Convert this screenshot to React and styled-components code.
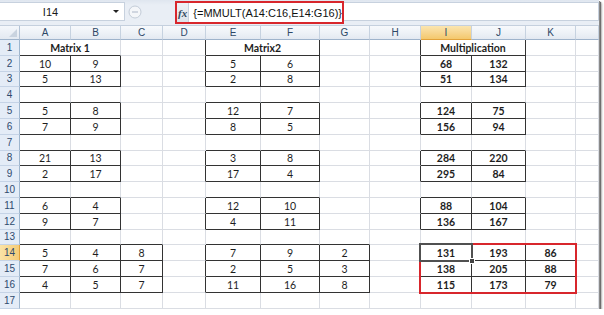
import React from "react";
import styled, { createGlobalStyle } from "styled-components";

const Global = createGlobalStyle`
  html, body { margin: 0; padding: 0; background: #ffffff; }
  body { font-family: Lato, "Open Sans", sans-serif; }
`;

const COL_WIDTHS = [51, 50, 42, 43, 55, 59, 50, 51, 51, 54, 50, 23];
const COL_NAMES = ["A", "B", "C", "D", "E", "F", "G", "H", "I", "J", "K", ""];
const ROW_COUNT = 17;
const ACTIVE_ROW = 14;
const ACTIVE_COL = 8;

const TABLES = [
  { r: 2, c: 0, rows: [[10, 9], [5, 13]] },
  { r: 5, c: 0, rows: [[5, 8], [7, 9]] },
  { r: 8, c: 0, rows: [[21, 13], [2, 17]] },
  { r: 11, c: 0, rows: [[6, 4], [9, 7]] },
  { r: 14, c: 0, rows: [[5, 4, 8], [7, 6, 7], [4, 5, 7]] },
  { r: 2, c: 4, rows: [[5, 6], [2, 8]] },
  { r: 5, c: 4, rows: [[12, 7], [8, 5]] },
  { r: 8, c: 4, rows: [[3, 8], [17, 4]] },
  { r: 11, c: 4, rows: [[12, 10], [4, 11]] },
  { r: 14, c: 4, rows: [[7, 9, 2], [2, 5, 3], [11, 16, 8]] },
  { r: 2, c: 8, bold: true, rows: [[68, 132], [51, 134]] },
  { r: 5, c: 8, bold: true, rows: [[124, 75], [156, 94]] },
  { r: 8, c: 8, bold: true, rows: [[284, 220], [295, 84]] },
  { r: 11, c: 8, bold: true, rows: [[88, 104], [136, 167]] },
  { r: 14, c: 8, bold: true, rows: [[131, 193, 86], [138, 205, 88], [115, 173, 79]] },
];

const TITLES = [
  { c: 0, span: 2, text: "Matrix 1", boxed: false },
  { c: 4, span: 2, text: "Matrix2", boxed: true },
  { c: 8, span: 2, text: "Multiplication", boxed: true },
];

const values = {};
const boxedSet = new Set();
TABLES.forEach((t) => {
  t.rows.forEach((row, i) =>
    row.forEach((v, j) => {
      const key = `${t.r + i},${t.c + j}`;
      values[key] = { text: String(v), bold: !!t.bold };
      boxedSet.add(key);
    })
  );
});
TITLES.forEach((t) => {
  if (t.boxed) for (let j = 0; j < t.span; j++) boxedSet.add(`1,${t.c + j}`);
});
const boxed = (r, c) => boxedSet.has(`${r},${c}`);

function buildRow(r) {
  const cells = [];
  for (let c = 0; c < COL_NAMES.length; ) {
    const title = r === 1 ? TITLES.find((t) => t.c === c) : null;
    const span = title ? title.span : 1;
    const v = values[`${r},${c}`];
    let bottom = false;
    for (let j = 0; j < span; j++) if (boxed(r, c + j) || boxed(r + 1, c + j)) bottom = true;
    const right = boxed(r, c + span - 1) || boxed(r, c + span);
    cells.push({
      key: `${r}-${c}`,
      c,
      span,
      text: title ? title.text : v ? v.text : "",
      bold: title ? true : v ? v.bold : false,
      right,
      bottom,
    });
    c += span;
  }
  return cells;
}

/* ---------- Formula bar ---------- */

const Window = styled.div`
  width: 599px;
  height: 309px;
  background: #ffffff;
  box-shadow: 1px 1px 0 #8a8a8a, 2px 2px 1px #6e6e6e, 3px 3px 2px rgba(0, 0, 0, 0.25);
  display: flex;
  flex-direction: column;
  overflow: hidden;
`;

const FormulaBar = styled.div`
  height: 26px;
  flex: none;
  box-sizing: border-box;
  display: flex;
  align-items: flex-start;
  padding-top: 2px;
  background: linear-gradient(#dfe6ef, #e9eef5 20%, #e9eef5);
  border-bottom: 1px solid #c5d0de;
`;

const NameBox = styled.div`
  width: 125px;
  height: 19px;
  box-sizing: border-box;
  background: #ffffff;
  border: 1px solid #c7d1de;
  border-left: none;
  display: flex;
  align-items: center;
  font-family: "Liberation Sans", Arial, sans-serif;
  font-size: 11px;
  color: #1a1a1a;
`;

const NameText = styled.span`
  flex: 1;
  text-align: center;
  padding-right: 12px;
`;

const DropArrow = styled.span`
  width: 0;
  height: 0;
  border-left: 3px solid transparent;
  border-right: 3px solid transparent;
  border-top: 3px solid #222;
  margin-right: 5px;
`;

const Grip = styled.div`
  width: 50px;
  height: 19px;
  display: flex;
  align-items: center;
  padding-left: 3px;
  box-sizing: border-box;
`;

const FxGroup = styled.div`
  width: 169px;
  height: 23px;
  margin-top: -1px;
  box-sizing: border-box;
  border: 2px solid #d8262c;
  display: flex;
  align-items: stretch;
  background: #ffffff;
  position: relative;
  z-index: 2;
`;

const FxButton = styled.div`
  width: 17px;
  background: linear-gradient(#eef1f5, #dde3ea);
  border-right: 1px solid #c7d1de;
  display: flex;
  align-items: center;
  justify-content: center;
  font-family: "Liberation Serif", "DejaVu Serif", serif;
  font-style: italic;
  font-weight: bold;
  font-size: 11px;
  color: #34495e;
`;

const FormulaText = styled.div`
  flex: 1;
  display: flex;
  align-items: center;
  padding-left: 4px;
  font-family: "Liberation Sans", Arial, sans-serif;
  font-size: 11px;
  color: #111;
  white-space: nowrap;
`;

const FormulaRest = styled.div`
  flex: 1;
  height: 19px;
  background: #ffffff;
  border: 1px solid #c7d1de;
  border-left: none;
  box-sizing: border-box;
`;

/* ---------- Sheet ---------- */

const Sheet = styled.div`
  display: grid;
  grid-template-columns: 20px ${COL_WIDTHS.map((w) => `${w}px`).join(" ")};
  grid-template-rows: 14px repeat(${ROW_COUNT}, 15.8px);
  font-size: 10.5px;
`;

const Corner = styled.div`
  grid-row: 1;
  grid-column: 1;
  background: linear-gradient(#f4f7fb, #e3e9f1);
  border-right: 1px solid #b3c3d6;
  border-bottom: 1px solid #9eb3cb;
  box-sizing: border-box;
  position: relative;
  &::after {
    content: "";
    position: absolute;
    right: 2px;
    bottom: 2px;
    border-left: 8px solid transparent;
    border-bottom: 8px solid #c9d3df;
  }
`;

const ColHead = styled.div`
  grid-row: 1;
  grid-column: ${(p) => p.$col + 2};
  box-sizing: border-box;
  display: flex;
  align-items: center;
  justify-content: center;
  background: ${(p) =>
    p.$active
      ? "linear-gradient(#fbe6b0, #f7d690 50%, #f4c86c)"
      : "linear-gradient(#f7f9fc, #eef2f7 50%, #e3e9f1)"};
  border-right: 1px solid #c6d2e0;
  border-bottom: 1px solid ${(p) => (p.$active ? "#e2a23a" : "#9eb3cb")};
  color: #2d4766;
  font-family: "Liberation Sans", Arial, sans-serif;
  font-size: 10px;
`;

const RowHead = styled.div`
  grid-row: ${(p) => p.$row + 1};
  grid-column: 1;
  box-sizing: border-box;
  display: flex;
  align-items: center;
  justify-content: center;
  background: ${(p) =>
    p.$active ? "linear-gradient(90deg, #fbe3a6, #f5cc78)" : "#e4ecf7"};
  border-right: 1px solid ${(p) => (p.$active ? "#e2a23a" : "#9eb6ce")};
  border-bottom: 1px solid #c5d3e6;
  color: #2f4a6d;
  font-family: "Liberation Sans", Arial, sans-serif;
  font-size: 10px;
`;

const Cell = styled.div`
  grid-row: ${(p) => p.$row + 1};
  grid-column: ${(p) => p.$col + 2} / span ${(p) => p.$span};
  box-sizing: border-box;
  display: flex;
  align-items: center;
  justify-content: center;
  padding-top: 1px;
  border-right: 1px solid ${(p) => (p.$right ? "#333333" : "#dadde3")};
  border-bottom: 1px solid ${(p) => (p.$bottom ? "#333333" : "#dadde3")};
  font-weight: ${(p) => (p.$bold ? 700 : 400)};
  color: #1e1e1e;
  white-space: nowrap;
`;

const ActiveCell = styled.div`
  grid-row: ${ACTIVE_ROW + 1};
  grid-column: ${ACTIVE_COL + 2};
  margin: -2px -1px -1px -2px;
  border: 2px solid #505050;
  pointer-events: none;
  position: relative;
`;

const FillHandle = styled.div`
  position: absolute;
  right: -4px;
  bottom: -4px;
  width: 4px;
  height: 4px;
  background: #444;
  border: 1px solid #ffffff;
`;

const RedFrame = styled.div`
  grid-row: ${ACTIVE_ROW + 1} / span 3;
  grid-column: ${ACTIVE_COL + 2} / span 3;
  margin: -2px -1px -1px -2px;
  border: 2px solid #d8262c;
  pointer-events: none;
`;

function GripIcon() {
  return (
    <svg width="14" height="14" viewBox="0 0 14 14">
      <circle cx="7" cy="7" r="6" fill="#f4f6f9" stroke="#c3ccd8" />
      <line x1="4" y1="7" x2="10" y2="7" stroke="#b8c2cf" strokeWidth="1.2" />
    </svg>
  );
}

export default function App() {
  const rows = [];
  for (let r = 1; r <= ROW_COUNT; r++) rows.push({ r, cells: buildRow(r) });

  return (
    <>
      <Global />
      <Window>
        <FormulaBar>
          <NameBox>
            <NameText>I14</NameText>
            <DropArrow />
          </NameBox>
          <Grip>
            <GripIcon />
          </Grip>
          <FxGroup>
            <FxButton>fx</FxButton>
            <FormulaText>{"{=MMULT(A14:C16,E14:G16)}"}</FormulaText>
          </FxGroup>
          <FormulaRest />
        </FormulaBar>
        <Sheet>
          <Corner />
          {COL_NAMES.map((n, i) => (
            <ColHead key={`h${i}`} $col={i} $active={i === ACTIVE_COL}>
              {n}
            </ColHead>
          ))}
          {rows.map(({ r, cells }) => (
            <React.Fragment key={r}>
              <RowHead $row={r} $active={r === ACTIVE_ROW}>
                {r}
              </RowHead>
              {cells.map((cell) => (
                <Cell
                  key={cell.key}
                  $row={r}
                  $col={cell.c}
                  $span={cell.span}
                  $right={cell.right}
                  $bottom={cell.bottom}
                  $bold={cell.bold}
                >
                  {cell.text}
                </Cell>
              ))}
            </React.Fragment>
          ))}
          <ActiveCell>
            <FillHandle />
          </ActiveCell>
          <RedFrame />
        </Sheet>
      </Window>
    </>
  );
}
